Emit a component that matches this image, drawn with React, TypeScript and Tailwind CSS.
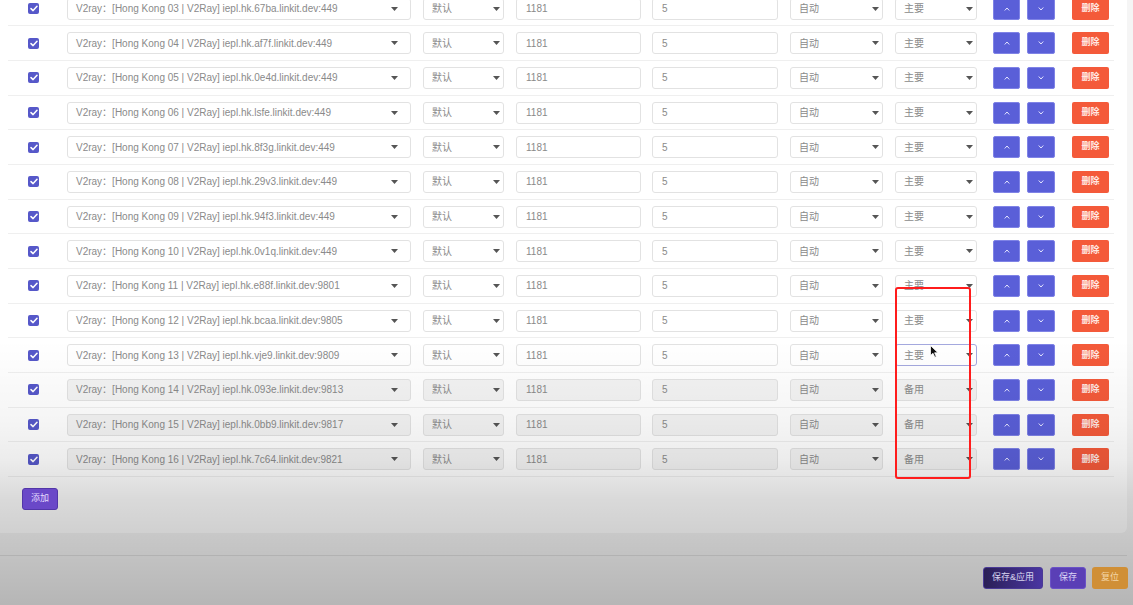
import React from "react";

type Row = { n: string; id: string; port: string; role: string; focus?: boolean };

const rows: Row[] = [
  { n: "03", id: "67ba", port: "449", role: "主要" },
  { n: "04", id: "af7f", port: "449", role: "主要" },
  { n: "05", id: "0e4d", port: "449", role: "主要" },
  { n: "06", id: "lsfe", port: "449", role: "主要" },
  { n: "07", id: "8f3g", port: "449", role: "主要" },
  { n: "08", id: "29v3", port: "449", role: "主要" },
  { n: "09", id: "94f3", port: "449", role: "主要" },
  { n: "10", id: "0v1q", port: "449", role: "主要" },
  { n: "11", id: "e88f", port: "9801", role: "主要" },
  { n: "12", id: "bcaa", port: "9805", role: "主要" },
  { n: "13", id: "vje9", port: "9809", role: "主要", focus: true },
  { n: "14", id: "093e", port: "9813", role: "备用" },
  { n: "15", id: "0bb9", port: "9817", role: "备用" },
  { n: "16", id: "7c64", port: "9821", role: "备用" },
];

function Caret() {
  return (
    <svg width="7" height="4" viewBox="0 0 7 4" className="shrink-0">
      <path d="M0 0 L7 0 L3.5 4 Z" fill="#555" />
    </svg>
  );
}

function Check() {
  return (
    <div className="flex h-[11px] w-[11px] items-center justify-center rounded-[2px] bg-[#5658c9]">
      <svg width="8" height="7" viewBox="0 0 8 7">
        <path d="M1 3.6 L3.1 5.6 L7 1.2" fill="none" stroke="#fff" strokeWidth="1.5" strokeLinecap="round" strokeLinejoin="round" />
      </svg>
    </div>
  );
}

function Chevron({ up }: { up?: boolean }) {
  return (
    <svg width="6" height="4" viewBox="0 0 6 4">
      <path d={up ? "M1 3.2 L3 1 L5 3.2" : "M1 0.8 L3 3 L5 0.8"} fill="none" stroke="#e4e5ff" strokeWidth="1" strokeLinecap="round" />
    </svg>
  );
}

function RowView({ r }: { r: Row }) {
  const grey = r.role === "备用";
  const field = grey ? "bg-[#f3f3f3]" : "bg-white";
  return (
    <div className="flex h-[34.68px] items-center border-b border-[#efefef]">
      <div className="ml-[20px] w-[11px]">
        <Check />
      </div>
      <div className={`ml-[28px] flex h-[22px] w-[344px] items-center justify-between rounded-[3px] border border-[#e2e2e2] pl-[8px] pr-[12px] ${field}`}>
        <span className="whitespace-nowrap">V2ray：[Hong Kong {r.n} | V2Ray] iepl.hk.{r.id}.linkit.dev:{r.port}</span>
        <Caret />
      </div>
      <div className={`ml-[12px] flex h-[22px] w-[81px] items-center justify-between rounded-[3px] border border-[#e2e2e2] pl-[8px] pr-[3px] ${field}`}>
        <span>默认</span>
        <Caret />
      </div>
      <div className={`ml-[12px] flex h-[22px] w-[125px] items-center rounded-[3px] border border-[#e2e2e2] pl-[9px] ${field}`}>
        <span>1181</span>
      </div>
      <div className={`ml-[11px] flex h-[22px] w-[126px] items-center rounded-[3px] border border-[#e2e2e2] pl-[9px] ${field}`}>
        <span>5</span>
      </div>
      <div className={`ml-[12px] flex h-[22px] w-[93px] items-center justify-between rounded-[3px] border border-[#e2e2e2] pl-[8px] pr-[3px] ${field}`}>
        <span>自动</span>
        <Caret />
      </div>
      <div
        className={`ml-[12px] flex h-[22px] w-[82px] items-center justify-between rounded-[3px] border pl-[8px] pr-[3px] ${field} ${
          r.focus ? "border-[#a4a8de]" : "border-[#e2e2e2]"
        }`}
      >
        <span>{r.role}</span>
        <Caret />
      </div>
      <div className="ml-[16px] flex h-[22px] w-[27px] items-center justify-center rounded-[2px] border border-[#7f83e6] bg-[#5a5fd8]">
        <Chevron up />
      </div>
      <div className="ml-[7px] flex h-[22px] w-[28px] items-center justify-center rounded-[2px] border border-[#7f83e6] bg-[#5a5fd8]">
        <Chevron />
      </div>
      <div className="ml-[17px] flex h-[22px] w-[37px] items-center justify-center rounded-[2px] bg-[#f45a3a] text-[9px] font-bold text-[#ffe9e4]">
        删除
      </div>
    </div>
  );
}

export default function App() {
  return (
    <div
      className="relative h-[605px] w-[1133px] overflow-hidden bg-[#f5f5f5] text-[10px] text-[#8a8a8a]"
      style={{ fontFamily: '"Liberation Sans", "Noto Sans CJK SC", sans-serif' }}
    >
      <div className="h-[533px] w-[1127px] overflow-hidden rounded-br-[6px] bg-white">
        <div className="mt-[-8.3px] ml-[8px] w-[1106px]">
          {rows.map((r) => (
            <RowView key={r.n} r={r} />
          ))}
        </div>
        <div className="relative z-20 ml-[22px] mt-[11px] flex h-[22px] w-[36px] items-center justify-center rounded-[3px] border border-[#5236a8] bg-[#6a48c8] text-[9px] text-[#e4dcff]">
          添加
        </div>
      </div>

      <div className="mt-[22px] w-[1133px]">
        <div className="w-[1127px] border-t border-[#e0e0e0]" />
        <div className="relative z-20 mr-[5px] mt-[11px] flex justify-end text-[9px]">
          <div className="flex h-[22px] w-[60px] items-center justify-center rounded-[3px] border border-[#4a3a96] bg-[linear-gradient(to_right,#2a1f56,#4a36a2)] text-[#d8d4ee]">
            保存&amp;应用
          </div>
          <div className="ml-[7px] flex h-[22px] w-[36px] items-center justify-center rounded-[3px] border border-[#6a52c6] bg-[#5a3fb6] text-[#ddd6f5]">
            保存
          </div>
          <div className="ml-[6px] flex h-[22px] w-[36px] items-center justify-center rounded-[3px] bg-[#d08f36] text-[#f4d6a6]">
            复位
          </div>
        </div>
      </div>

      {/* video fade overlay */}
      <div className="pointer-events-none absolute inset-0 z-10 bg-[linear-gradient(to_bottom,rgba(0,0,0,0)_340px,rgba(0,0,0,0.02)_380px,rgba(0,0,0,0.04)_420px,rgba(0,0,0,0.075)_460px,rgba(0,0,0,0.15)_500px,rgba(0,0,0,0.18)_530px,rgba(0,0,0,0.21)_560px,rgba(0,0,0,0.26)_605px)]" />

      {/* annotation */}
      <div className="pointer-events-none absolute left-[895px] top-[287px] z-30 h-[192px] w-[76px] rounded-[3px] border-2 border-[#ff1c1c]" />

      {/* mouse cursor */}
      <svg className="absolute left-[930px] top-[345px] z-30" width="9" height="13" viewBox="0 0 9 13">
        <path d="M0.5 0.5 L0.5 10.5 L3 8.3 L4.8 12.3 L6.3 11.6 L4.6 7.8 L8 7.8 Z" fill="#111" stroke="#fff" strokeWidth="0.8" />
      </svg>
    </div>
  );
}
